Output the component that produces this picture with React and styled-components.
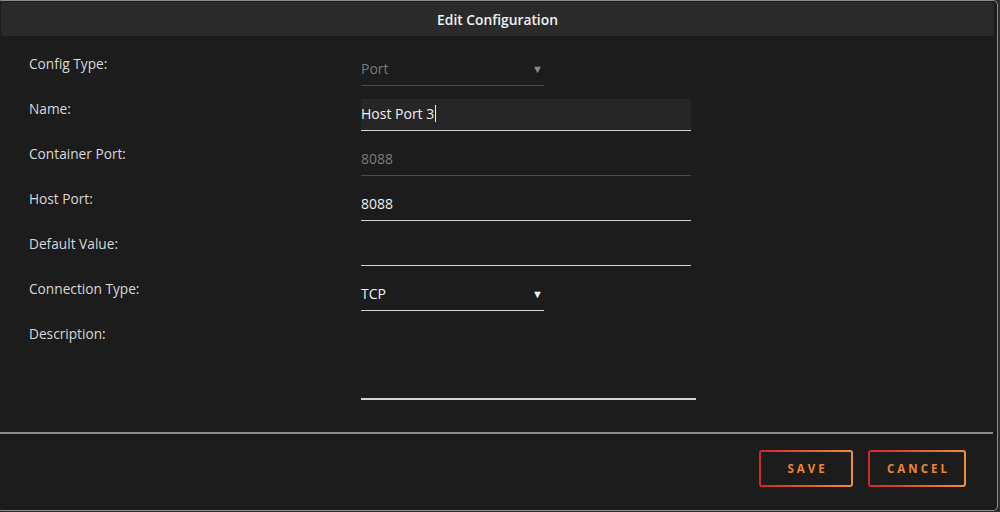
import React from "react";
import styled, { createGlobalStyle } from "styled-components";

const GlobalStyle = createGlobalStyle`
	html, body {
		margin: 0;
		padding: 0;
		background: #2e2e2e;
		overflow: hidden;
	}
	body {
		font-family: "Open Sans", Lato, sans-serif;
	}
`;

const Modal = styled.div`
	box-sizing: border-box;
	width: 1001px;
	height: 511px;
	margin-left: -3px;
	background: #1c1c1c;
	border: 1.5px solid #8d8d8d;
	border-radius: 5px;
	display: flex;
	flex-direction: column;
	overflow: hidden;
`;

const Header = styled.div`
	height: 34px;
	margin: 1px 3px 0 3px;
	background: #2a2a2a;
	border-radius: 4px;
	display: flex;
	align-items: center;
	justify-content: center;
	color: #f2f2f2;
	font-size: 13.8px;
	font-weight: 600;
`;

const Form = styled.div`
	display: grid;
	grid-template-columns: 332px 1fr;
	grid-template-rows: repeat(6, 45px) auto;
	padding: 16px 0 0 31px;
`;

const Label = styled.div`
	font-size: 13.7px;
	line-height: 24px;
	color: #d9d9d9;
`;

const Field = styled.div`
	box-sizing: border-box;
	width: ${(p) => (p.$short ? "183px" : p.$wide ? "335px" : "330px")};
	height: ${(p) => (p.$tall ? "76px" : "32px")};
	margin-top: 2px;
	padding: 0 1px 0 0;
	display: flex;
	align-items: ${(p) => (p.$tall ? "flex-start" : "center")};
	justify-content: space-between;
	background: ${(p) => (p.$filled ? "#262626" : "transparent")};
	border-bottom: ${(p) => (p.$tall ? "2px" : "1px")} solid
		${(p) => (p.$disabled ? "#4a4a4a" : "#d4d4d4")};
	font-size: 14px;
	color: ${(p) => (p.$disabled ? "#7b7b7b" : "#f0f0f0")};
`;

const Value = styled.span`
	display: inline-flex;
	align-items: center;
	padding-bottom: 3px;
`;

const Caret = styled.span`
	display: inline-block;
	width: 1px;
	height: 17px;
	margin-left: 1px;
	background: #f0f0f0;
`;

const Arrow = styled.span`
	font-size: 11px;
	padding-bottom: 3px;
	color: ${(p) => (p.$disabled ? "#8a8a8a" : "#f0f0f0")};
`;

const Divider = styled.div`
	height: 2px;
	margin: 32px 4px 0 0;
	background: #8a8a8a;
`;

const Footer = styled.div`
	display: flex;
	justify-content: flex-end;
	gap: 15px;
	padding: 16px 31px 0 0;
`;

const Button = styled.button`
	box-sizing: border-box;
	width: ${(p) => p.$w}px;
	height: 37px;
	border: 2px solid transparent;
	border-radius: 3px;
	background: linear-gradient(#1c1c1c, #1c1c1c) padding-box,
		linear-gradient(90deg, #d3262b, #f0903a) border-box;
	color: #ea8638;
	font-family: "Open Sans", Lato, sans-serif;
	font-size: 11.5px;
	font-weight: 700;
	letter-spacing: 3px;
	padding: 0 0 0 3px;
	cursor: pointer;
`;

const rows = [
	{ label: "Config Type:", value: "Port", short: true, disabled: true, select: true },
	{ label: "Name:", value: "Host Port 3", filled: true, caret: true },
	{ label: "Container Port:", value: "8088", disabled: true },
	{ label: "Host Port:", value: "8088" },
	{ label: "Default Value:", value: "" },
	{ label: "Connection Type:", value: "TCP", short: true, select: true },
];

export default function App() {
	return (
		<>
			<GlobalStyle />
			<Modal>
				<Header>Edit Configuration</Header>
				<Form>
					{rows.map((r) => (
						<React.Fragment key={r.label}>
							<Label>{r.label}</Label>
							<Field $short={r.short} $disabled={r.disabled} $filled={r.filled}>
								<Value>
									{r.value}
									{r.caret && <Caret />}
								</Value>
								{r.select && <Arrow $disabled={r.disabled}>▼</Arrow>}
							</Field>
						</React.Fragment>
					))}
					<Label>Description:</Label>
					<Field $tall $wide />
				</Form>
				<Divider />
				<Footer>
					<Button $w={94}>SAVE</Button>
					<Button $w={98}>CANCEL</Button>
				</Footer>
			</Modal>
		</>
	);
}
